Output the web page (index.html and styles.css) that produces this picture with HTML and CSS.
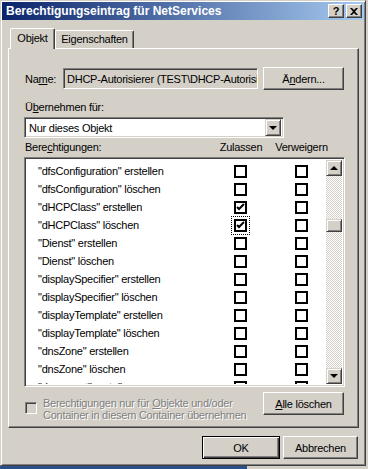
FILE: index.html
```html
<!DOCTYPE html>
<html lang="de">
<head>
    <meta charset="UTF-8">
    <title>Berechtigungseintrag für NetServices</title>
    <link rel="stylesheet" href="styles.css">
</head>
<body>
<div class="window">
  <div class="titlebar">
    <span class="title">Berechtigungseintrag für NetServices</span>
    <span class="tbtn help">?</span>
    <span class="tbtn close">
      <svg width="8" height="7" viewBox="0 0 8 7"><path d="M0 0h2l2 2 2-2h2L5 3.5 8 7H6L4 5 2 7H0l3-3.5z" fill="#000"/></svg>
    </span>
  </div>

  <div class="tabs">
    <div class="tab active">Objekt</div>
    <div class="tab">Eigenschaften</div>
  </div>

  <div class="panel">
    <div class="name-row">
      <span class="label">Na<u>m</u>e:</span>
      <div class="field readonly">DHCP-Autorisierer (TEST\DHCP-Autorisierer)</div>
      <button class="btn wide">Ä<u>n</u>dern...</button>
    </div>

    <div class="label apply">Ü<u>b</u>ernehmen für:</div>
    <div class="combo">
      <span class="combo-text">Nur dieses Objekt</span>
      <span class="combo-arrow"><span class="arrow down"></span></span>
    </div>

    <div class="perm-head">
      <span>Bere<u>c</u>htigungen:</span>
      <span class="col">Zulassen</span>
      <span class="col">Verweigern</span>
    </div>

    <div class="listbox">
      <div class="rows">
        <div class="row"><span>"dfsConfiguration" erstellen</span><i class="cb"></i><i class="cb"></i></div>
        <div class="row"><span>"dfsConfiguration" löschen</span><i class="cb"></i><i class="cb"></i></div>
        <div class="row"><span>"dHCPClass" erstellen</span><i class="cb checked"></i><i class="cb"></i></div>
        <div class="row"><span>"dHCPClass" löschen</span><i class="cb checked focus"></i><i class="cb"></i></div>
        <div class="row"><span>"Dienst" erstellen</span><i class="cb"></i><i class="cb"></i></div>
        <div class="row"><span>"Dienst" löschen</span><i class="cb"></i><i class="cb"></i></div>
        <div class="row"><span>"displaySpecifier" erstellen</span><i class="cb"></i><i class="cb"></i></div>
        <div class="row"><span>"displaySpecifier" löschen</span><i class="cb"></i><i class="cb"></i></div>
        <div class="row"><span>"displayTemplate" erstellen</span><i class="cb"></i><i class="cb"></i></div>
        <div class="row"><span>"displayTemplate" löschen</span><i class="cb"></i><i class="cb"></i></div>
        <div class="row"><span>"dnsZone" erstellen</span><i class="cb"></i><i class="cb"></i></div>
        <div class="row"><span>"dnsZone" löschen</span><i class="cb"></i><i class="cb"></i></div>
        <div class="row"><span>"document" erstellen</span><i class="cb"></i><i class="cb"></i></div>
      </div>
      <div class="scrollbar">
        <span class="sbtn"><span class="arrow up"></span></span>
        <div class="track"><span class="thumb"></span></div>
        <span class="sbtn"><span class="arrow down"></span></span>
      </div>
    </div>

    <div class="bottom-row">
      <i class="cb disabled"></i>
      <div class="inherit">Berechtigungen nur für <u>O</u>bjekte und/oder<br>Container in diesem Container übernehmen</div>
      <button class="btn wide"><u>A</u>lle löschen</button>
    </div>
  </div>

  <div class="dlg-buttons">
    <button class="btn default">OK</button>
    <button class="btn cancel">Abbrechen</button>
  </div>
</div>
<div class="desktop"></div>
</body>
</html>
```

FILE: styles.css
```css
body { margin: 0; background: #d4d0c8; font-family: "Liberation Sans", Arial, sans-serif; font-size: 11px; letter-spacing: -0.25px; color: #000; }
u { text-decoration: underline; text-underline-offset: 1px; }

/* window frame */
.window {
  width: 366px;
  height: 466px;
  box-sizing: border-box;
  border: 1px solid;
  border-color: #d4d0c8 #404040 #404040 #d4d0c8;
  box-shadow: inset 1px 1px #fff, inset -1px -1px #808080;
  padding: 1px;
}
.titlebar {
  height: 18px;
  display: flex;
  align-items: center;
  padding: 0 2px;
  background: linear-gradient(to right, #0a246a, #a6caf0);
}
.title { flex: 1; color: #fff; font-weight: bold; font-size: 12px; letter-spacing: 0; padding-left: 2px; }
.tbtn {
  width: 16px;
  height: 14px;
  box-sizing: border-box;
  display: flex;
  align-items: center;
  justify-content: center;
  background: #d4d0c8;
  border: 1px solid;
  border-color: #fff #404040 #404040 #fff;
  box-shadow: inset -1px -1px #808080;
  font-weight: bold;
  font-size: 11px;
  letter-spacing: 0;
}
.help { margin-right: 2px; }

/* tabs */
.tabs { display: flex; align-items: flex-end; margin: 8px 0 0 8px; position: relative; z-index: 1; }
.tab {
  height: 18px;
  box-sizing: border-box;
  text-align: center;
  line-height: 16px;
  border: 1px solid;
  border-bottom: none;
  border-color: #fff #404040 #404040 #fff;
  box-shadow: inset -1px 0 #808080;
  border-radius: 2px 2px 0 0;
  background: #d4d0c8;
  width: 79px;
}
.tab.active { height: 21px; width: 45px; margin-bottom: -1px; line-height: 18px; }

/* property page */
.panel {
  margin-left: 6px;
  width: 351px;
  height: 380px;
  box-sizing: border-box;
  border: 1px solid;
  border-color: #fff #404040 #404040 #fff;
  box-shadow: inset -1px -1px #808080;
  padding: 18px 13px 0 15px;
  display: flex;
  flex-direction: column;
}
.label { padding-left: 1px; }
.name-row { display: flex; align-items: center; height: 23px; }
.name-row .label { width: 38px; }
.field {
  width: 195px;
  height: 21px;
  box-sizing: border-box;
  border: 1px solid;
  border-color: #808080 #fff #fff #808080;
  box-shadow: inset 1px 1px #404040, inset -1px -1px #d4d0c8;
  padding: 4px 0 0 3px;
  white-space: nowrap;
  overflow: hidden;
}
.readonly { background: #d4d0c8; }

.btn {
  font: inherit;
  letter-spacing: inherit;
  color: #000;
  height: 23px;
  box-sizing: border-box;
  background: #d4d0c8;
  border: 1px solid;
  border-color: #fff #404040 #404040 #fff;
  box-shadow: inset -1px -1px #808080;
  padding: 0;
  margin: 0;
}
.btn.wide { width: 81px; margin-left: auto; margin-right: 1px; }

.apply { margin-top: 11px; line-height: 13px; }
.combo {
  margin-top: 3px;
  width: 260px;
  height: 21px;
  box-sizing: border-box;
  border: 1px solid;
  border-color: #808080 #fff #fff #808080;
  box-shadow: inset 1px 1px #404040, inset -1px -1px #d4d0c8;
  background: #fff;
  display: flex;
  align-items: center;
  padding: 2px;
}
.combo-text { flex: 1; padding-left: 2px; }
.combo-arrow {
  width: 16px;
  height: 17px;
  box-sizing: border-box;
  background: #d4d0c8;
  border: 1px solid;
  border-color: #d4d0c8 #404040 #404040 #d4d0c8;
  box-shadow: inset 1px 1px #fff, inset -1px -1px #808080;
  display: flex;
  align-items: center;
  justify-content: center;
}
.arrow { width: 0; height: 0; border-left: 4px solid transparent; border-right: 4px solid transparent; }
.arrow.down { border-top: 4px solid #000; }
.arrow.up { border-bottom: 4px solid #000; }

.perm-head { display: grid; grid-template-columns: 186px 60px 61px; margin-top: 3px; line-height: 13px; padding-left: 1px; }
.perm-head .col { text-align: center; }

/* permissions list */
.listbox {
  margin-top: 3px;
  height: 230px;
  box-sizing: border-box;
  border: 1px solid;
  border-color: #808080 #fff #fff #808080;
  box-shadow: inset 1px 1px #404040, inset -1px -1px #d4d0c8;
  background: #fff;
  padding: 2px;
  display: flex;
}
.rows { flex: 1; overflow: hidden; padding-top: 2px; }
.row { display: grid; grid-template-columns: 207px 13px 48px 13px; align-items: center; height: 18px; }
.row span { padding-left: 11px; white-space: nowrap; }
.row .cb:last-child { grid-column: 4; }
.cb {
  display: block;
  width: 13px;
  height: 13px;
  box-sizing: border-box;
  border: 2px solid #000;
  background: #fff;
}
.cb.checked {
  background: #fff url("data:image/svg+xml,%3Csvg xmlns='http://www.w3.org/2000/svg' width='9' height='9'%3E%3Cpath d='M1 4l2 2 5-5' stroke='%23000' stroke-width='2' fill='none'/%3E%3C/svg%3E") center no-repeat;
}
.cb.focus { outline: 1px dotted #000; outline-offset: 2px; }

.scrollbar { width: 16px; display: flex; flex-direction: column; }
.sbtn {
  width: 16px;
  height: 16px;
  box-sizing: border-box;
  background: #d4d0c8;
  border: 1px solid;
  border-color: #d4d0c8 #404040 #404040 #d4d0c8;
  box-shadow: inset 1px 1px #fff, inset -1px -1px #808080;
  display: flex;
  align-items: center;
  justify-content: center;
}
.track {
  flex: 1;
  background: repeating-conic-gradient(#fff 0 25%, #d4d0c8 0 50%) 0 0 / 2px 2px;
}
.thumb {
  display: block;
  margin-top: 43px;
  height: 13px;
  box-sizing: border-box;
  background: #d4d0c8;
  border: 1px solid;
  border-color: #d4d0c8 #404040 #404040 #d4d0c8;
  box-shadow: inset 1px 1px #fff, inset -1px -1px #808080;
}

.bottom-row { display: flex; align-items: flex-start; margin-top: 5px; }
.cb.disabled {
  margin: 10px 0 0 1px;
  width: 12px;
  height: 12px;
  border: 1px solid;
  border-color: #808080 #fff #fff #808080;
  box-shadow: inset 1px 1px #404040, inset -1px -1px #d4d0c8;
  background: #d4d0c8;
}
.inherit { margin: 5px 0 0 6px; line-height: 12px; color: #808080; text-shadow: 1px 1px #fff; }

.dlg-buttons { display: flex; justify-content: flex-end; gap: 3px; margin-top: 8px; padding-right: 6px; }
.btn.default {
  width: 78px;
  border: 1px solid #000;
  box-shadow: inset 1px 1px #fff, inset -1px -1px #404040, inset -2px -2px #808080;
}
.btn.cancel { width: 75px; }

.desktop { width: 247px; height: 3px; background: #2a4f8a; }
```
